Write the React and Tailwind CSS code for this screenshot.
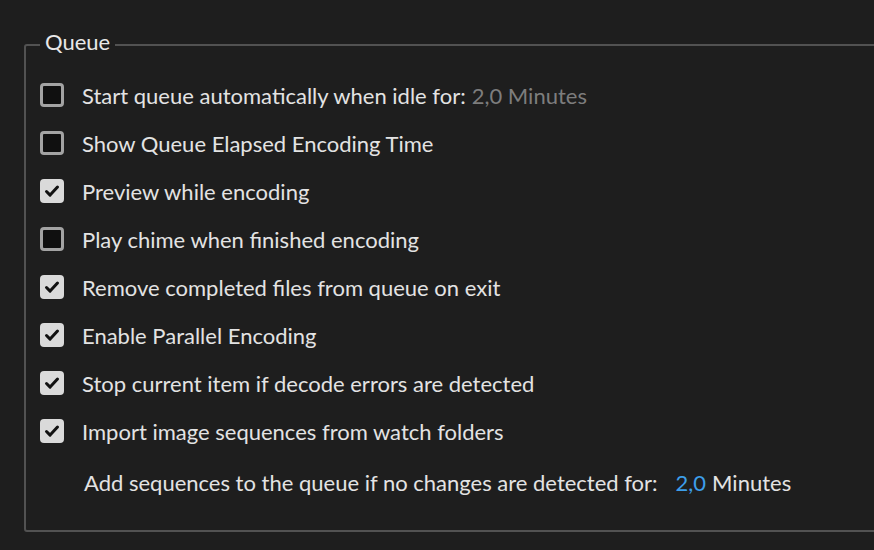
import React from 'react';

const items = [
  { label: 'Start queue automatically when idle for:', checked: false, extra: '2,0 Minutes' },
  { label: 'Show Queue Elapsed Encoding Time', checked: false },
  { label: 'Preview while encoding', checked: true },
  { label: 'Play chime when finished encoding', checked: false },
  { label: 'Remove completed files from queue on exit', checked: true },
  { label: 'Enable Parallel Encoding', checked: true },
  { label: 'Stop current item if decode errors are detected', checked: true },
  { label: 'Import image sequences from watch folders', checked: true },
];

const Checkbox = ({ checked }) =>
  checked ? (
    <div className="w-[24px] h-[24px] rounded-[4px] bg-[#dadada] flex items-center justify-center shrink-0">
      <svg width="18" height="18" viewBox="0 0 18 18" fill="none">
        <path d="M3.5 9.5l3.6 3.6L14.5 5" stroke="#111" strokeWidth="3" strokeLinecap="round" strokeLinejoin="round" />
      </svg>
    </div>
  ) : (
    <div className="w-[24px] h-[24px] rounded-[4px] border-[3px] border-[#a3a3a3] bg-[#101010] shrink-0" />
  );

export default function App() {
  return (
    <div
      className="w-full h-[550px] overflow-hidden bg-[#1e1e1e] text-[#e3e3e3] pt-[27px]"
      style={{ fontFamily: 'Lato, "Open Sans", sans-serif' }}
    >
      <fieldset className="ml-[24px] w-[900px] h-[505px] border-2 border-[#525252] rounded-[3px] pl-[14px]">
        <legend className="ml-0 px-[5px] pb-[5px] text-[22px] leading-[30px] text-[#e8e8e8]">Queue</legend>
        <div className="flex flex-col pt-[9px]">
          {items.map((it) => (
            <div key={it.label} className="h-[48px] flex items-center gap-[18px]">
              <Checkbox checked={it.checked} />
              <span className="text-[22px]">
                {it.label}
                {it.extra && <span className="ml-[6px] text-[#7d7d7d]">{it.extra}</span>}
              </span>
            </div>
          ))}
          <div className="h-[52px] pt-[2px] flex items-center pl-[44px] text-[22px]">
            <span>Add sequences to the queue if no changes are detected for:</span>
            <span className="ml-[18px] text-[#3d9eea]">2,0</span>
            <span className="ml-[6px]">Minutes</span>
          </div>
        </div>
      </fieldset>
    </div>
  );
}
